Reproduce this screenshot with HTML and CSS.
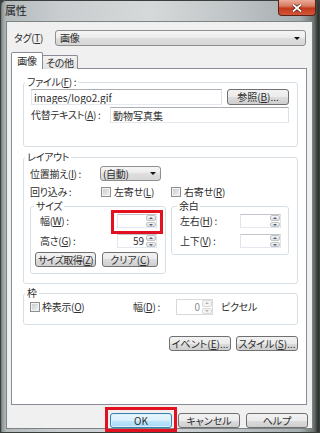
FILE: index.html
```html
<!DOCTYPE html>
<html lang="ja">
<head>
  <meta charset="UTF-8" />
  <title>属性</title>
  <link rel="stylesheet" href="styles.css">
</head>
<body>
  <div class="window">
    <div class="titlebar">
      <span class="title">属性</span>
      <span class="close">
        <svg width="10" height="8" viewBox="0 0 10 8"><path d="M1 0.5 L9 7.5 M9 0.5 L1 7.5" stroke="#4a1a10" stroke-width="3.2"/><path d="M1 0.5 L9 7.5 M9 0.5 L1 7.5" stroke="#fff" stroke-width="1.8"/></svg>
      </span>
    </div>
    <div class="frame">
      <div class="client">
        <div class="tag-row">
          <span class="tag-label">タグ(<u>T</u>)</span>
          <div class="combo combo-tag"><span>画像</span><i class="arrow"></i></div>
        </div>

        <div class="tabs">
          <span class="tab active">画像</span>
          <span class="tab">その他</span>
        </div>

        <div class="panel">
          <fieldset class="group group-file">
            <legend>ファイル(<u>F</u>) :</legend>
            <div class="group-body">
              <div class="row">
                <input type="text" class="textbox file-path" value="images/logo2.gif" />
                <button class="btn btn-browse">参照(<u>B</u>)...</button>
              </div>
              <div class="row row-alt">
                <label class="lbl lbl-alt">代替テキスト(<u>A</u>) :</label>
                <input type="text" class="textbox alt-text" value="動物写真集" />
              </div>
            </div>
          </fieldset>

          <fieldset class="group group-layout">
            <legend>レイアウト</legend>
            <div class="group-body">
              <div class="row row-align">
                <label class="lbl lbl-align">位置揃え(<u>I</u>) :</label>
                <div class="combo combo-align"><span>(自動)</span><i class="arrow"></i></div>
              </div>
              <div class="row row-wrap">
                <label class="lbl lbl-wrap">回り込み :</label>
                <span class="check-item"><span class="check"></span>左寄せ(<u>L</u>)</span>
                <span class="check-item"><span class="check"></span>右寄せ(<u>R</u>)</span>
              </div>
              <div class="subgroups">
                <fieldset class="group group-size">
                  <legend>サイズ</legend>
                  <div class="group-body">
                    <div class="row sz-row">
                      <label class="lbl lbl-size">幅(<u>W</u>) :</label>
                      <div class="spin spin-size">
                        <input type="text" value="" />
                        <span class="spin-btns"><i class="up"></i><i class="down"></i></span>
                        <span class="mark mark-width"></span>
                      </div>
                    </div>
                    <div class="row sz-row sz-gap">
                      <label class="lbl lbl-size">高さ(<u>G</u>) :</label>
                      <div class="spin spin-size">
                        <input type="text" value="59" />
                        <span class="spin-btns"><i class="up"></i><i class="down"></i></span>
                      </div>
                    </div>
                    <div class="row size-buttons">
                      <button class="btn btn-getsize">サイズ取得(<u>Z</u>)</button>
                      <button class="btn btn-clear">クリア(<u>C</u>)</button>
                    </div>
                  </div>
                </fieldset>

                <fieldset class="group group-margin">
                  <legend>余白</legend>
                  <div class="group-body">
                    <div class="row">
                      <label class="lbl lbl-margin">左右(<u>H</u>) :</label>
                      <div class="spin spin-margin">
                        <input type="text" value="" />
                        <span class="spin-btns"><i class="up"></i><i class="down"></i></span>
                      </div>
                    </div>
                    <div class="row sz-gap">
                      <label class="lbl lbl-margin">上下(<u>V</u>) :</label>
                      <div class="spin spin-margin">
                        <input type="text" value="" />
                        <span class="spin-btns"><i class="up"></i><i class="down"></i></span>
                      </div>
                    </div>
                  </div>
                </fieldset>
              </div>
            </div>
          </fieldset>

          <fieldset class="group group-border">
            <legend>枠</legend>
            <div class="group-body">
              <div class="row row-border">
                <span class="check-item check-border"><span class="check"></span>枠表示(<u>O</u>)</span>
                <label class="lbl lbl-bwidth">幅(<u>D</u>) :</label>
                <div class="spin spin-border disabled">
                  <input type="text" value="0" disabled />
                  <span class="spin-btns"><i class="up"></i><i class="down"></i></span>
                </div>
                <span class="unit">ピクセル</span>
              </div>
            </div>
          </fieldset>

          <div class="panel-buttons">
            <button class="btn">イベント(<u>E</u>)...</button>
            <button class="btn">スタイル(<u>S</u>)...</button>
          </div>
        </div>

        <div class="dialog-buttons">
          <span class="ok-wrap">
            <button class="btn btn-default">OK</button>
            <span class="mark mark-ok"></span>
          </span>
          <button class="btn">キャンセル</button>
          <button class="btn">ヘルプ</button>
        </div>
      </div>
    </div>
  </div>
</body>
</html>
```

FILE: styles.css
```css
* { box-sizing: border-box; }
body { margin: 0; background: #3a3f3c; font-family: "Noto Sans CJK JP", "Noto Sans", sans-serif; font-size: 10px; line-height: 12px; letter-spacing: -0.3px; color: #2e2e2e; font-feature-settings: "palt"; }
u { text-decoration: underline; text-underline-offset: 1px; }

/* window frame */
.window { width: 320px; height: 433px; display: flex; flex-direction: column; border-radius: 6px 6px 0 0; overflow: hidden;
  background: linear-gradient(to right, #3f4441 0px, #8d9495 2px, #b4babc 6px, #c9cdcf 60px, #d6d9da 150px, #c0c5c7 230px, #a7aeb0 300px, #6a716f 314px, #2e3330 318px);
  box-shadow: inset 0 0 0 1px #3a3f3c; }
.titlebar { height: 22px; display: flex; align-items: flex-start; padding-left: 5px; }
.title { margin-top: 4px; font-size: 11px; line-height: 13px; color: #1a1a1a; }
.close { margin-left: auto; margin-right: 4px; width: 38px; height: 16px; display: flex; align-items: center; justify-content: center; border: 1px solid #5a2316; border-top: none; border-radius: 0 0 4px 4px;
  background: linear-gradient(#e9ab99, #d87a62 40%, #c3391b 55%, #d4573b); }
.frame { flex: 1; display: flex; padding: 0 8px 5px 7px; }
.client { flex: 1; display: flex; flex-direction: column; background: #f0f0f0; padding: 8px 5px 0 4px; box-shadow: 0 0 0 1px #7b8385; }

/* tag row */
.tag-row { display: flex; align-items: center; height: 16px; padding-left: 3px; }
.tag-label { width: 41px; }
.combo { display: flex; align-items: center; height: 16px; padding-left: 4px; border: 1px solid #8e8f8f; border-radius: 3px;
  background: linear-gradient(#f6f6f6, #ebebeb 50%, #dfdfdf 50%, #d6d6d6); }
.combo-tag { width: 251px; }
.arrow { margin-left: auto; margin-right: 5px; width: 0; height: 0; border-left: 3px solid transparent; border-right: 3px solid transparent; border-top: 3px solid #111; }

/* tabs */
.tabs { display: flex; align-items: flex-end; height: 17px; margin-top: 6px; margin-bottom: -1px; position: relative; z-index: 1; }
.tab { height: 14px; padding: 0 3px; margin-left: -1px; border: 1px solid #898c95; border-bottom: none; border-radius: 2px 2px 0 0; line-height: 13px;
  background: linear-gradient(#f3f3f3, #e2e2e2); }
.tab.active { height: 17px; width: 32px; margin-left: 0; text-align: center; line-height: 15px; background: #fff; position: relative; z-index: 1; }
.panel { flex: 1; background: #fff; border: 1px solid #898c95; padding: 7px 8px 0 11px; }

/* group boxes */
.group { margin: 0; padding: 0; min-width: 0; border: 1px solid #d5dfe5; border-radius: 3px; }
.group legend { padding: 0 2px; margin-left: 1px; line-height: 12px; }
.row { display: flex; align-items: center; white-space: nowrap; }
.lbl { flex: none; }

.group-file .group-body { padding: 1px 8px 23px 7px; }
.textbox { height: 16px; margin: 0; padding: 0 2px; font: inherit; color: inherit; background: #fff; border: 1px solid; border-color: #abadb3 #dbdfe6 #e3e9ef #e2e3ea; }
.file-path { width: 191px; }
.btn { height: 16px; margin: 0; padding: 0; font: inherit; color: #2e2e2e; white-space: nowrap; border: 1px solid #707070; border-radius: 3px;
  background: linear-gradient(#f2f2f2, #ebebeb 50%, #dddddd 50%, #cfcfcf); }
.btn-browse { width: 62px; margin-left: 5px; }
.row-alt { margin-top: 2px; }
.lbl-alt { width: 79px; }
.alt-text { width: 179px; }

.group-layout { margin-top: 4px; }
.group-layout .group-body { padding: 3px 8px 9px 6px; }
.row-align { height: 15px; }
.lbl-align { width: 70px; }
.combo-align { width: 61px; height: 15px; padding-left: 2px; }
.combo-align .arrow { margin-right: 4px; }
.row-wrap { height: 14px; margin-top: 4px; }
.lbl-wrap { width: 71px; }
.check-item { display: flex; align-items: center; width: 70px; }
.check { width: 10px; height: 10px; margin-right: 3px; border: 1px solid #8f8f8f; background: linear-gradient(135deg, #c6cacf, #f4f4f4); box-shadow: inset 0 0 0 1px #f2f2f2; }

.subgroups { display: flex; align-items: flex-start; gap: 5px; margin-top: 1px; }
.group-size { width: 136px; }
.group-size legend { margin-left: 3px; }
.group-size .group-body { padding: 2px 4px 6px 4px; }
.sz-row { padding-left: 5px; height: 14px; }
.sz-gap { margin-top: 6px; }
.lbl-size { width: 77px; }
.size-buttons { margin-top: 4px; gap: 6px; }
.btn-getsize { width: 61px; height: 15px; letter-spacing: -0.6px; }
.btn-clear { width: 56px; height: 15px; }
.group-margin { width: 118px; }
.group-margin legend { margin-left: 5px; }
.group-margin .group-body { padding: 2px 4px 6px 8px; }
.group-margin .row { height: 14px; }
.lbl-margin { width: 60px; }

/* spin boxes */
.spin { position: relative; display: flex; height: 14px; background: #fff; border: 1px solid; border-color: #c2c6cc #e2e3ea #e3e9ef #e2e3ea; }
.spin input { flex: 1; min-width: 0; margin: 0; padding: 0 2px 0 0; border: none; font: inherit; color: inherit; text-align: right; background: transparent; }
.spin-btns { width: 10px; display: flex; flex-direction: column; gap: 1px; }
.spin-btns i { flex: 1; position: relative; border: 1px solid #c3c3c3; border-radius: 2px; background: linear-gradient(#f5f5f5, #dedede); }
.spin-btns i::after { content: ""; position: absolute; left: 2px; top: 1px; border-left: 2px solid transparent; border-right: 2px solid transparent; }
.spin-btns .up::after { border-bottom: 2px solid #4d6185; }
.spin-btns .down::after { border-top: 2px solid #4d6185; }
.spin-size { width: 40px; }
.spin-margin { width: 41px; }
.spin-border { width: 37px; height: 16px; }
.spin.disabled { border-color: #d9d9d9; }
.spin.disabled input { color: #8d8d8d; }
.spin.disabled .spin-btns i { border-color: #dadada; background: #f4f4f4; }
.spin.disabled .spin-btns i::after { border-bottom-color: #b5b5b5; border-top-color: #b5b5b5; }

/* red annotation marks */
.mark { position: absolute; border: 3px solid #e3111f; pointer-events: none; }
.mark-width { top: -5px; left: -7px; right: -7px; bottom: -7px; }
.ok-wrap { position: relative; display: flex; }
.mark-ok { top: -6px; left: -5px; right: -5px; bottom: -4px; }

.group-border { margin-top: 3px; }
.group-border .group-body { padding: 0 8px 9px 6px; }
.row-border { height: 16px; }
.check-border { width: 103px; }
.check-border .check { margin-right: 2px; }
.lbl-bwidth { width: 43px; }
.unit { margin-left: 8px; }

.panel-buttons { display: flex; justify-content: flex-end; gap: 5px; margin-top: 11px; }
.panel-buttons .btn { width: 62px; height: 15px; }

/* dialog buttons */
.dialog-buttons { display: flex; justify-content: flex-end; gap: 6px; height: 15px; margin: 8px -1px 0 0; }
.dialog-buttons .btn { width: 62px; height: 15px; }
.btn-default { border-color: #3c7fb1; background: linear-gradient(#eaf6fd, #d9f0fc 50%, #bee6fd 50%, #a7d9f5); box-shadow: inset 0 0 0 1px #d9f1fb; }
```
